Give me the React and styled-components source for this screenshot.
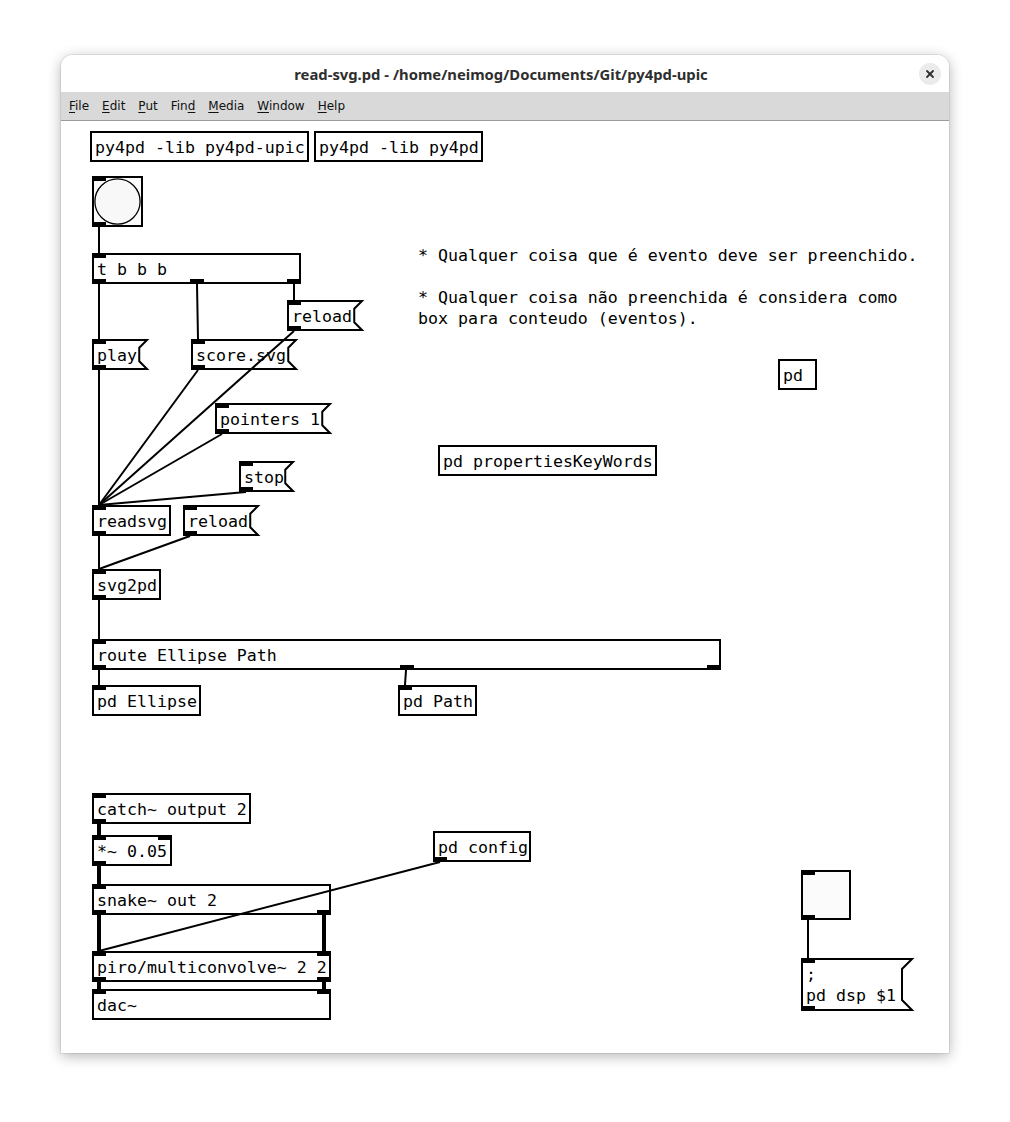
import React from 'react';
import styled, { createGlobalStyle } from 'styled-components';
import { X } from 'lucide-react';

const MONO = `"DejaVu Sans Mono", "Liberation Mono", monospace`;

const GlobalStyle = createGlobalStyle`
  html, body {
    margin: 0;
    padding: 0;
    background: #fff;
  }
`;

const Page = styled.div`
  width: 1010px;
  height: 1122px;
  box-sizing: border-box;
  padding: 55px 61px 0;
  background: #fff;
`;

const Window = styled.div`
  width: 888px;
  height: 998px;
  display: flex;
  flex-direction: column;
  background: #fff;
  border-radius: 12px 12px 0 0;
  box-shadow: 0 3px 14px rgba(0, 0, 0, 0.3), 0 0 0 1px rgba(0, 0, 0, 0.07);
  overflow: hidden;
`;

const TitleBar = styled.div`
  height: 37px;
  flex: none;
  display: grid;
  grid-template-columns: 1fr auto 1fr;
  align-items: center;
  padding-right: 8px;
  background: #fff;
  font-family: "Noto Sans", sans-serif;
  font-weight: 700;
  font-size: 14.8px;
  color: #2e2e2e;
`;

const Title = styled.div`
  grid-column: 2;
  white-space: nowrap;
  padding-top: 1px;
`;

const CloseButton = styled.div`
  grid-column: 3;
  justify-self: end;
  width: 22px;
  height: 22px;
  border-radius: 50%;
  background: #ebebeb;
  display: flex;
  align-items: center;
  justify-content: center;
  color: #2e2e2e;
`;

const MenuBar = styled.div`
  height: 28px;
  flex: none;
  display: flex;
  align-items: center;
  gap: 13px;
  padding-left: 8px;
  background: #d9d9d9;
  border-bottom: 1px solid #9b9b9b;
  font-family: "DejaVu Sans", sans-serif;
  font-size: 12px;
  color: #111;
`;

const MenuItem = styled.span`
  white-space: pre;
  u {
    text-decoration: underline;
    text-underline-offset: 2px;
  }
`;

const Canvas = styled.div`
  position: relative;
  flex: 1;
  background: #fff;
  overflow: hidden;
`;

const Node = styled.div`
  position: absolute;
  left: ${p => p.$x}px;
  top: ${p => p.$y}px;
  width: ${p => p.$w}px;
  box-sizing: border-box;
  font-family: ${MONO};
  font-size: 16.6px;
  line-height: 21px;
  color: #000;
  white-space: pre;
`;

const ObjBox = styled(Node)`
  height: 31px;
  border: 2px solid #000;
  padding: 4px 0 0 3px;
`;

const MsgBox = styled(Node)`
  height: ${p => p.$h}px;
  border: 2px solid transparent;
  padding: 4px 0 0 3px;
`;

const MsgOutline = styled.svg`
  position: absolute;
  left: -2px;
  top: -2px;
  overflow: visible;
`;

const Comment = styled(Node)`
  width: auto;
`;

const GuiBox = styled(Node)`
  height: ${p => p.$w}px;
  border: 2px solid #000;
  background: #fbfbfb;
`;

const Iolet = styled.span`
  position: absolute;
  width: 14px;
  height: 5px;
  background: #000;
  ${p => (p.$side === 'bottom' ? 'bottom: -2px;' : 'top: -2px;')}
  ${p =>
    p.$at === 'right'
      ? 'right: -2px;'
      : p.$at === 'mid'
      ? 'left: calc(50% - 7px);'
      : 'left: -2px;'}
`;

const Wires = styled.svg`
  position: absolute;
  left: 0;
  top: 0;
  z-index: 2;
  pointer-events: none;
`;

const Text = styled.span`
  position: relative;
`;

// inlets / outlets
const io = (ins = [], outs = []) => (
  <>
    {ins.map(a => <Iolet key={'i' + a} $at={a} $side="top" />)}
    {outs.map(a => <Iolet key={'o' + a} $at={a} $side="bottom" />)}
  </>
);

const Obj = ({ x, y, w, text, ins, outs }) => (
  <ObjBox $x={x} $y={y} $w={w}>
    {text}
    {io(ins, outs)}
  </ObjBox>
);

const Msg = ({ x, y, w, h = 31, text }) => {
  const c = h / 4 > 10 ? 10 : h / 4;
  const pts = `1,1 ${w - 1},1 ${w - 1 - c},${1 + c} ${w - 1 - c},${h - 1 - c} ${w - 1},${h - 1} 1,${h - 1}`;
  return (
    <MsgBox $x={x} $y={y} $w={w} $h={h}>
      <MsgOutline width={w} height={h}>
        <polygon points={pts} fill="none" stroke="#000" strokeWidth="2" />
      </MsgOutline>
      <Text>{text}</Text>
      {io(['left'], ['left'])}
    </MsgBox>
  );
};

const Bang = ({ x, y }) => (
  <GuiBox $x={x} $y={y} $w={51}>
    <svg width="47" height="47" style={{ display: 'block' }}>
      <circle cx="23.5" cy="23.5" r="22.6" fill="#f8f8f8" stroke="#000" strokeWidth="1.3" />
    </svg>
    {io(['left'], ['left'])}
  </GuiBox>
);

const Toggle = ({ x, y }) => (
  <GuiBox $x={x} $y={y} $w={50}>
    {io(['left'], ['left'])}
  </GuiBox>
);

const objects = [
  { x: 29, y: 10, w: 219, text: 'py4pd -lib py4pd-upic' },
  { x: 253, y: 10, w: 169, text: 'py4pd -lib py4pd' },
  { x: 31, y: 132, w: 209, text: 't b b b', ins: ['left'], outs: ['left', 'mid', 'right'] },
  { x: 31, y: 384, w: 79, text: 'readsvg', ins: ['left'], outs: ['left'] },
  { x: 31, y: 448, w: 69, text: 'svg2pd', ins: ['left'], outs: ['left'] },
  { x: 31, y: 518, w: 629, text: 'route Ellipse Path', ins: ['left'], outs: ['left', 'mid', 'right'] },
  { x: 31, y: 564, w: 109, text: 'pd Ellipse', ins: ['left'] },
  { x: 337, y: 564, w: 79, text: 'pd Path', ins: ['left'] },
  { x: 717, y: 238, w: 39, text: 'pd' },
  { x: 377, y: 324, w: 219, text: 'pd propertiesKeyWords' },
  { x: 31, y: 672, w: 159, text: 'catch~ output 2', ins: ['left'], outs: ['left'] },
  { x: 31, y: 714, w: 80, text: '*~ 0.05', ins: ['left', 'right'], outs: ['left'] },
  { x: 372, y: 710, w: 98, text: 'pd config', outs: ['left'] },
  { x: 31, y: 763, w: 239, text: 'snake~ out 2', ins: ['left'], outs: ['left', 'right'] },
  { x: 31, y: 830, w: 239, text: 'piro/multiconvolve~ 2 2', ins: ['left', 'right'], outs: ['left', 'right'] },
  { x: 31, y: 868, w: 239, text: 'dac~', ins: ['left', 'right'] },
];

const messages = [
  { x: 226, y: 179, w: 76, text: 'reload' },
  { x: 31, y: 218, w: 56, text: 'play' },
  { x: 130, y: 218, w: 106, text: 'score.svg' },
  { x: 154, y: 282, w: 116, text: 'pointers 1' },
  { x: 178, y: 340, w: 55, text: 'stop' },
  { x: 122, y: 384, w: 76, text: 'reload' },
  { x: 740, y: 837, w: 112, h: 53, text: ';\npd dsp $1' },
];

// [x1, y1, x2, y2, signal]
const wires = [
  [38, 106, 38, 132],
  [38, 163, 38, 218],
  [136, 163, 137, 218],
  [233, 163, 233, 179],
  [38, 249, 38, 384],
  [137, 249, 38, 384],
  [233, 210, 38, 384],
  [161, 313, 38, 384],
  [185, 371, 38, 384],
  [38, 415, 38, 448],
  [129, 415, 38, 448],
  [38, 479, 38, 518],
  [38, 549, 38, 564],
  [345, 549, 344, 564],
  [38, 703, 38, 714, true],
  [38, 745, 38, 763, true],
  [38, 794, 38, 830, true],
  [263, 794, 263, 830, true],
  [38, 861, 38, 868, true],
  [263, 861, 263, 868, true],
  [379, 741, 38, 830],
  [747, 799, 747, 837],
];

const menus = [
  ['', 'F', 'ile'],
  ['', 'E', 'dit'],
  ['', 'P', 'ut'],
  ['Fin', 'd', ''],
  ['', 'M', 'edia'],
  ['', 'W', 'indow'],
  ['', 'H', 'elp'],
];

export default function App() {
  return (
    <>
      <GlobalStyle />
      <Page>
        <Window>
          <TitleBar>
            <Title>read-svg.pd - /home/neimog/Documents/Git/py4pd-upic</Title>
            <CloseButton>
              <X size={12} strokeWidth={3.6} />
            </CloseButton>
          </TitleBar>
          <MenuBar>
            {menus.map(([a, u, b]) => (
              <MenuItem key={a + u + b}>
                {a}
                <u>{u}</u>
                {b}
              </MenuItem>
            ))}
          </MenuBar>
          <Canvas>
            {objects.map(o => (
              <Obj key={o.text + o.x} {...o} />
            ))}
            {messages.map(m => (
              <Msg key={m.text + m.x} {...m} />
            ))}
            <Bang x={31} y={55} />
            <Toggle x={740} y={749} />
            <Comment $x={357} $y={124}>
              {'* Qualquer coisa que é evento deve ser preenchido.\n\n* Qualquer coisa não preenchida é considera como\nbox para conteudo (eventos).'}
            </Comment>
            <Wires width="888" height="932">
              {wires.map(([x1, y1, x2, y2, sig], i) => (
                <line
                  key={i}
                  x1={x1}
                  y1={y1}
                  x2={x2}
                  y2={y2}
                  stroke="#000"
                  strokeWidth={sig ? 4 : 2}
                />
              ))}
            </Wires>
          </Canvas>
        </Window>
      </Page>
    </>
  );
}
